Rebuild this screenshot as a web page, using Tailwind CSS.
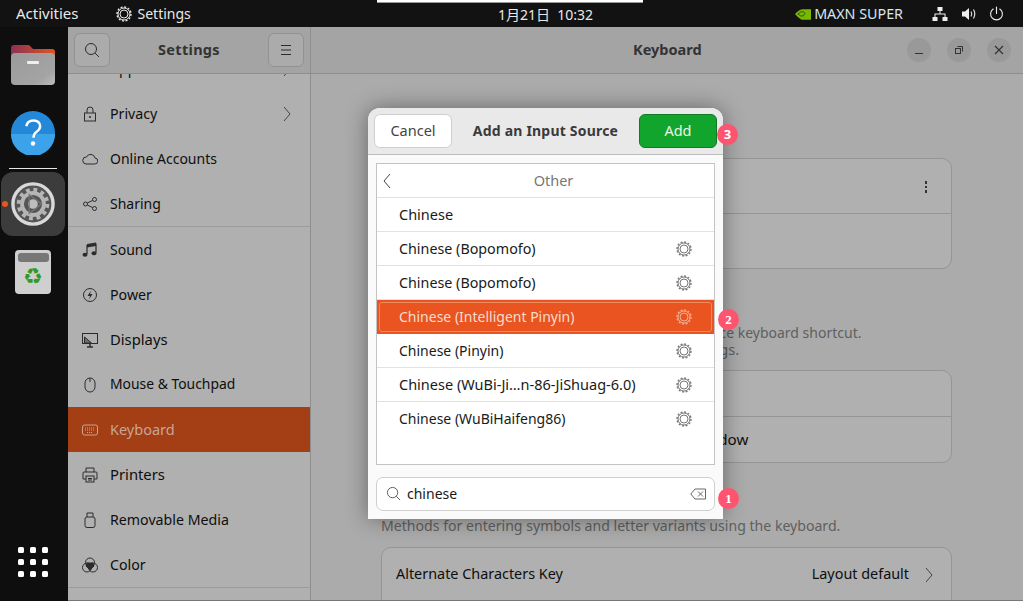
<!DOCTYPE html>
<html><head><meta charset="utf-8"><script src="https://cdn.jsdelivr.net/npm/@tailwindcss/browser@4"></script></head>
<body class="w-[1023px] h-[601px] overflow-hidden bg-[#0e0e0e] font-['Noto_Sans','Noto_Sans_CJK_SC',sans-serif] text-[14.2px]">
<div class="relative w-[1023px] h-[601px] flex flex-col overflow-hidden">
<!-- top bar -->
<header class="h-[27px] shrink-0 bg-[#121212] text-[#e9e9e9] flex items-center relative text-[14px]">
  <span class="ml-[16px] text-[15px]">Activities</span>
  <span class="ml-[37px] flex items-center gap-[6px]">
    <svg class="w-[16px] h-[16px]" viewBox="0 0 16 16" fill="none" stroke="#e9e9e9"><circle cx="8" cy="8" r="7" stroke-width="1.400" stroke-dasharray="2 1.660"/><circle cx="8" cy="8" r="6" stroke-width="1"/><circle cx="8" cy="8" r="4" stroke-width="1"/></svg>
    Settings</span>
  <span class="absolute left-[498px] top-[5px] text-[14px] leading-[20px]">1月21日&nbsp; 10:32</span>
  <span class="absolute left-[377px] top-0 w-[266px] h-[3px] bg-white border-b border-[#999]"></span>
  <div class="ml-auto flex items-center mr-[19px]">
    <svg class="w-[16px] h-[12px] mr-[3px]" viewBox="0 0 17 12"><path d="M0 6 Q5 0 10 1 H17 V12 H7 Q3 10 0 6Z" fill="#76b900"/><path d="M3 6 Q6 3 9 3.500 Q12 5 9 8 Q6 9 3 6Z" fill="none" stroke="#345200" stroke-width="1"/></svg>
    <span class="text-[#d8e6f0] text-[14.300px]">MAXN SUPER</span>
    <svg class="w-[16px] h-[16px] ml-[29px]" viewBox="0 0 16 16" fill="#eee"><rect x="5.500" y="1" width="5" height="4"/><rect x="0.500" y="11" width="5" height="4"/><rect x="10.500" y="11" width="5" height="4"/><path d="M7.500 5h1v2.500h5V11h-1V8.500H3.500V11h-1V7.500h5z"/></svg>
    <svg class="w-[16px] h-[16px] ml-[13px]" viewBox="0 0 16 16"><path d="M1 5.500h3L8 2v12L4 10.500H1z" fill="#eee"/><path d="M10 5.500q1.500 2.500 0 5M12.500 3.500q2.500 4.500 0 9" fill="none" stroke="#ddd" stroke-width="1.200"/></svg>
    <svg class="w-[15px] h-[15px] ml-[12px]" viewBox="0 0 16 16" fill="none" stroke="#eee" stroke-width="1.200" stroke-linecap="round"><path d="M8 1v7M4.500 3.200a6.300 6.300 0 1 0 7 0"/></svg>
  </div>
</header>
<div class="flex-1 flex min-h-0">
  <!-- dock -->
  <aside class="w-[68px] shrink-0 bg-[#0e0e0e] flex flex-col items-center relative pr-[2px]">
    <svg class="w-[46px] h-[42px] mt-[17px]" viewBox="0 0 46 42"><defs><linearGradient id="f1" x1="0" y1="0" x2="1" y2="0"><stop offset="0" stop-color="#8e3055"/><stop offset="1" stop-color="#e0561f"/></linearGradient><linearGradient id="f2" x1="0" y1="0" x2="1" y2="1"><stop offset="0" stop-color="#9a9a9a"/><stop offset=".75" stop-color="#a4a4a4"/><stop offset="1" stop-color="#bdbdbd"/></linearGradient></defs><path d="M1 20V4q0-3 3-3h15l4 4h19q3 0 3 3v12z" fill="url(#f1)"/><rect x="1" y="9" width="44" height="32" rx="4" fill="url(#f2)"/><rect x="17" y="17" width="12" height="3" rx="1" fill="#eee"/></svg>
    <svg class="w-[44px] h-[44px] mt-[25px]" viewBox="0 0 46 46"><circle cx="23" cy="23" r="23" fill="#2488d8"/><path d="M0 24a23 23 0 0 0 46 0z" fill="#3ca3ea"/><path d="M16 16q1-6 7.500-6t7 6q0 3-4 6-3 2-3 6" fill="none" stroke="#fff" stroke-width="2.500"/><circle cx="23" cy="34" r="2.300" fill="#fff"/></svg>
    <div class="w-[48px] h-[1px] bg-[#e8e8e8] mt-[13px]"></div>
    <div class="w-[64px] h-[64px] rounded-[12px] bg-[#3c3c3c] mt-[3px] flex items-center justify-center relative">
      <span class="absolute left-[1px] top-[29px] w-[6px] h-[6px] rounded-full bg-[#e95420]"></span>
      <svg class="w-[44px] h-[44px]" viewBox="0 0 46 46"><circle cx="23" cy="23" r="21" fill="#555" stroke="#d9d9d9" stroke-width="3.500"/><circle cx="23" cy="23" r="11.500" fill="none" stroke="#b5b5b5" stroke-width="4" /><circle cx="23" cy="23" r="15" fill="none" stroke="#b5b5b5" stroke-width="4" stroke-dasharray="4 3.850"/><circle cx="23" cy="23" r="5" fill="#bdbdbd"/><path d="M19 13l13 10-13 10z" fill="none" stroke="#777" stroke-width="1.200"/></svg>
    </div>
    <div class="w-[36px] h-[44px] mt-[14px] rounded-[4px] bg-[#cfcfcf] flex flex-col items-center pt-[3px]">
      <span class="w-[31px] h-[9px] rounded-[3px] bg-[#777] shrink-0"></span>
      <span class="text-[#2f9a27] text-[22px] leading-[30px] font-['DejaVu_Sans',sans-serif]">♻</span>
    </div>
    <div class="absolute left-[18px] bottom-[24px] grid grid-cols-3 gap-[6px]">
      <span class="w-[6px] h-[6px] rounded-[1.500px] bg-white"></span><span class="w-[6px] h-[6px] rounded-[1.500px] bg-white"></span><span class="w-[6px] h-[6px] rounded-[1.500px] bg-white"></span>
      <span class="w-[6px] h-[6px] rounded-[1.500px] bg-white"></span><span class="w-[6px] h-[6px] rounded-[1.500px] bg-white"></span><span class="w-[6px] h-[6px] rounded-[1.500px] bg-white"></span>
      <span class="w-[6px] h-[6px] rounded-[1.500px] bg-white"></span><span class="w-[6px] h-[6px] rounded-[1.500px] bg-white"></span><span class="w-[6px] h-[6px] rounded-[1.500px] bg-white"></span>
    </div>
  </aside>
  <!-- window -->
  <div class="flex-1 flex flex-col min-w-0 border-b border-[#777]">
    <div class="h-[47px] shrink-0 flex bg-[#a4a4a4] border-b border-[#8e8e8e]">
      <div class="w-[243px] shrink-0 border-r border-[#8e8e8e] flex items-center justify-between px-[6px]">
        <span class="w-[36px] h-[34px] rounded-[6px] border border-[#929292] bg-[#ababab] flex items-center justify-center"><svg class="w-[16px] h-[16px]" viewBox="0 0 16 16" fill="none" stroke="#2c2c2c" stroke-width="1"><circle cx="7" cy="7" r="5.500"/><path d="M11 11l4 4"/></svg></span>
        <span class="font-bold text-[#333] tracking-[.3px] text-[14.500px]">Settings</span>
        <span class="w-[36px] h-[34px] rounded-[6px] border border-[#929292] bg-[#ababab] flex items-center justify-center"><svg class="w-[12px] h-[10px]" viewBox="0 0 12 10" stroke="#2c2c2c"><path d="M1 .5h10M1 5h10M1 9.500h10"/></svg></span>
      </div>
      <div class="flex-1 flex items-center relative">
        <span class="absolute left-[322px] font-bold text-[#333] text-[14.500px]">Keyboard</span>
        <div class="ml-auto flex gap-[16px] mr-[12px]">
          <span class="w-[24px] h-[24px] rounded-full bg-[#999] flex items-center justify-center"><svg class="w-[10px] h-[10px]" viewBox="0 0 10 10" stroke="#333"><path d="M1 8.500h8"/></svg></span>
          <span class="w-[24px] h-[24px] rounded-full bg-[#999] flex items-center justify-center"><svg class="w-[10px] h-[10px]" viewBox="0 0 10 10" fill="none" stroke="#333"><rect x="1.500" y="3.500" width="5" height="5"/><path d="M3.500 1.500h5v5"/></svg></span>
          <span class="w-[24px] h-[24px] rounded-full bg-[#999] flex items-center justify-center"><svg class="w-[10px] h-[10px]" viewBox="0 0 10 10" stroke="#333" stroke-width="1.200"><path d="M1 1l8 8M9 1l-8 8"/></svg></span>
        </div>
      </div>
    </div>
    <div class="flex-1 flex min-h-0">
      <!-- sidebar -->
      <nav class="w-[243px] shrink-0 bg-[#b0b0b0] border-r border-[#8e8e8e] overflow-hidden text-[#0e0e0e]">
        <div class="-mt-[28px]">
          <div class="h-[45px] flex items-center pl-[42px] relative">Applications<svg class="absolute left-[214px] w-[10px] h-[16px]" viewBox="0 0 10 16" fill="none" stroke="#444"><path d="M2 1l6 7-6 7"/></svg></div>
          <div class="h-[45px] flex items-center relative"><svg class="w-[16px] h-[16px] ml-[14px] mr-[12px]" viewBox="0 0 16 16" fill="none" stroke="#2c2c2c"><rect x="2.500" y="7" width="11" height="8"/><path d="M5 7V4a3 3 0 0 1 6 0v3"/><circle cx="8" cy="11" r=".6" fill="#2c2c2c"/></svg>Privacy<svg class="absolute left-[214px] w-[10px] h-[16px]" viewBox="0 0 10 16" fill="none" stroke="#444"><path d="M2 1l6 7-6 7"/></svg></div>
          <div class="h-[45px] flex items-center text-[14px]"><svg class="w-[16px] h-[16px] ml-[14px] mr-[12px]" viewBox="0 0 16 16" fill="none" stroke="#2c2c2c"><path d="M4 13h8.500a3 3 0 0 0 .5-6 4.500 4.500 0 0 0-8.500-1A3.500 3.500 0 0 0 4 13z"/></svg>Online Accounts</div>
          <div class="h-[45px] flex items-center border-b border-[#9b9b9b] box-content text-[14px]"><svg class="w-[16px] h-[16px] ml-[14px] mr-[12px]" viewBox="0 0 16 16" fill="none" stroke="#2c2c2c"><circle cx="3.500" cy="8" r="2"/><circle cx="12.500" cy="3.500" r="2"/><circle cx="12.500" cy="12.500" r="2"/><path d="M5.300 7l5.400-2.600M5.300 9l5.400 2.600"/></svg>Sharing</div>
          <div class="h-[45px] flex items-center text-[14px]"><svg class="w-[16px] h-[16px] ml-[14px] mr-[12px]" viewBox="0 0 16 16"><path d="M5 3v9M14 1.500v9" stroke="#2c2c2c" stroke-width="1.200"/><path d="M5 2l9-1.500V4L5 5.500z" fill="#2c2c2c"/><ellipse cx="3" cy="12.800" rx="2.500" ry="2" fill="#2c2c2c"/><ellipse cx="12" cy="11.300" rx="2.500" ry="2" fill="#2c2c2c"/></svg>Sound</div>
          <div class="h-[45px] flex items-center"><svg class="w-[16px] h-[16px] ml-[14px] mr-[12px]" viewBox="0 0 16 16" fill="none" stroke="#2c2c2c"><circle cx="8" cy="8" r="6.500"/><path d="M9 3.500L5.500 9h2.500l-1 3.500L10.500 7H8z" fill="#2c2c2c" stroke="none"/></svg>Power</div>
          <div class="h-[45px] flex items-center text-[14.800px]"><svg class="w-[16px] h-[16px] ml-[14px] mr-[12px]" viewBox="0 0 16 16" fill="none" stroke="#2c2c2c"><rect x=".5" y="1.500" width="15" height="10"/><path d="M5 15h6M8 11.500V15" stroke-width="1.500"/><path d="M2.500 5l7 6H2.500z" fill="#2c2c2c" fill-opacity=".5"/></svg>Displays</div>
          <div class="h-[45px] flex items-center text-[13.900px]"><svg class="w-[16px] h-[16px] ml-[14px] mr-[12px]" viewBox="0 0 16 16" fill="none" stroke="#2c2c2c"><rect x="3" y="1" width="10" height="14" rx="5"/><path d="M8 1v4"/></svg>Mouse &amp; Touchpad</div>
          <div class="h-[45px] flex items-center bg-[#a33e15] text-[#c9a597] text-[14.500px]"><svg class="w-[16px] h-[16px] ml-[14px] mr-[12px]" viewBox="0 0 16 16" fill="none" stroke="#c9a597"><rect x=".5" y="3" width="15" height="10" rx="2"/><path d="M3 6h10M3 8h10M5 10.500h6" stroke-dasharray="1 1"/></svg>Keyboard</div>
          <div class="h-[45px] flex items-center text-[14.800px]"><svg class="w-[16px] h-[16px] ml-[14px] mr-[12px]" viewBox="0 0 16 16" fill="none" stroke="#2c2c2c"><path d="M4 5V1h8v4"/><path d="M4 12H1V6q0-1 1-1h12q1 0 1 1v6h-3"/><rect x="4" y="9" width="8" height="6"/><path d="M6 11.500h4M6 13h4"/></svg>Printers</div>
          <div class="h-[45px] flex items-center"><svg class="w-[16px] h-[16px] ml-[14px] mr-[12px]" viewBox="0 0 16 16" fill="none" stroke="#2c2c2c"><rect x="3" y="5" width="10" height="10.500" rx="2"/><path d="M5 5V1h6v4M7 3h0M9 3h0"/></svg>Removable Media</div>
          <div class="h-[45px] flex items-center border-b border-[#9b9b9b] box-content"><svg class="w-[16px] h-[16px] ml-[14px] mr-[12px]" viewBox="0 0 16 16" fill="none" stroke="#2c2c2c"><circle cx="8" cy="5.500" r="4.500"/><circle cx="5" cy="10.500" r="4.500"/><circle cx="11" cy="10.500" r="4.500"/><path d="M5 6h6l1 3-4 4-4-4z" fill="#2c2c2c"/></svg>Color</div>
        </div>
      </nav>
      <!-- main -->
      <main class="flex-1 bg-[#ababab] pl-[70px] pr-[71px] min-w-0 text-[#0e0e0e] overflow-hidden">
        <div class="mt-[84px] h-[111px] rounded-[10px] border border-[#959595] bg-[#b0b0b0] flex flex-col">
          <div class="h-[55px] border-b border-[#959595] flex justify-end pr-[24px] pt-[22px]"><span class="flex flex-col gap-[2px]"><i class="w-[2.500px] h-[2.500px] bg-[#333]"></i><i class="w-[2.500px] h-[2.500px] bg-[#333]"></i><i class="w-[2.500px] h-[2.500px] bg-[#333]"></i></span></div>
        </div>
        <p class="mt-[55px] text-[#5f5f5f] text-[14px] leading-[17px] whitespace-nowrap">Input sources can be switched using the Super+Space keyboard shortcut.<br><span class="text-[14.650px]">This can be changed in Keyboard Shortcuts settings.</span></p>
        <div class="mt-[12px] h-[93px] rounded-[10px] border border-[#959595] bg-[#b0b0b0] flex flex-col">
          <div class="h-[46px] border-b border-[#959595]"></div>
          <div class="flex-1 flex items-center pl-[14px] text-[15.150px] whitespace-nowrap">Switch input sources individually for each window</div>
        </div>
        <p class="mt-[53px] text-[#5f5f5f] text-[14.100px] leading-[20px]">Methods for entering symbols and letter variants using the keyboard.</p>
        <div class="mt-[11px] h-[70px] rounded-t-[10px] border border-[#959595] bg-[#b0b0b0] flex pl-[14px] pr-[17px] pt-[15px] items-start justify-between text-[14.400px]">
          <span>Alternate Characters Key</span>
          <span class="flex items-center">Layout default<svg class="w-[10px] h-[16px] ml-[15px] mt-[2px]" viewBox="0 0 10 16" fill="none" stroke="#444"><path d="M2 1l6 7-6 7"/></svg></span>
        </div>
      </main>
    </div>
  </div>
</div>
<!-- dialog -->
<div class="absolute left-[368px] top-[108px] w-[355px] h-[411px] rounded-t-[12px] bg-[#fafafa] shadow-[0_0_22px_rgba(0,0,0,.4)] flex flex-col text-[#1a1a1a] text-[14px]">
  <div class="h-[47px] shrink-0 rounded-t-[12px] bg-[#e9e9e9] border-b border-[#bdbdbd] flex items-center px-[6px] justify-between">
    <span class="w-[78px] h-[34px] rounded-[6px] border border-[#cfcfcf] bg-white flex items-center justify-center text-[#444] text-[14.500px]">Cancel</span>
    <span class="font-bold text-[#3a3a3a] tracking-[.2px] text-[14px] pb-[2px]">Add an Input Source</span>
    <span class="w-[78px] h-[34px] rounded-[6px] border border-[#117a22] bg-[#12a52d] flex items-center justify-center text-[#e8f5e8] text-[14.500px]">Add</span>
  </div>
  <div class="mx-[8px] mt-[8px] h-[302px] border border-[#c4c4c4] bg-white flex flex-col">
    <div class="h-[34px] border-b border-[#e2e2e2] flex items-center relative justify-center text-[#777] pl-[16px] text-[14.500px]"><svg class="absolute left-[6px] w-[8px] h-[16px]" viewBox="0 0 8 16" fill="none" stroke="#444"><path d="M7 1L1 8l6 7"/></svg>Other</div>
    <div class="h-[34px] border-b border-[#e2e2e2] flex items-center pl-[22px] text-[14.500px]">Chinese</div>
    <div class="h-[34px] border-b border-[#e2e2e2] flex items-center justify-between pl-[22px] pr-[22px] text-[14.300px]">Chinese (Bopomofo)<svg class="w-[16px] h-[16px]" viewBox="0 0 16 16" fill="none" stroke="#777"><circle cx="8" cy="8" r="7" stroke-width="1.400" stroke-dasharray="2 1.660"/><circle cx="8" cy="8" r="6" stroke-width="1"/><circle cx="8" cy="8" r="4" stroke-width="1"/></svg></div>
    <div class="h-[34px] border-b border-[#e2e2e2] flex items-center justify-between pl-[22px] pr-[22px] text-[14.300px]">Chinese (Bopomofo)<svg class="w-[16px] h-[16px]" viewBox="0 0 16 16" fill="none" stroke="#777"><circle cx="8" cy="8" r="7" stroke-width="1.400" stroke-dasharray="2 1.660"/><circle cx="8" cy="8" r="6" stroke-width="1"/><circle cx="8" cy="8" r="4" stroke-width="1"/></svg></div>
    <div class="h-[34px] bg-[#e95420] p-[2px]"><div class="h-full border border-[#f08a5f] rounded-[3px] flex items-center justify-between pl-[19px] pr-[19px] pb-[1px] text-[#f6dccf]">Chinese (Intelligent Pinyin)<svg class="w-[16px] h-[16px]" viewBox="0 0 16 16" fill="none" stroke="#f2b094"><circle cx="8" cy="8" r="7" stroke-width="1.400" stroke-dasharray="2 1.660"/><circle cx="8" cy="8" r="6" stroke-width="1"/><circle cx="8" cy="8" r="4" stroke-width="1"/></svg></div></div>
    <div class="h-[34px] border-b border-[#e2e2e2] flex items-center justify-between pl-[22px] pr-[22px]">Chinese (Pinyin)<svg class="w-[16px] h-[16px]" viewBox="0 0 16 16" fill="none" stroke="#777"><circle cx="8" cy="8" r="7" stroke-width="1.400" stroke-dasharray="2 1.660"/><circle cx="8" cy="8" r="6" stroke-width="1"/><circle cx="8" cy="8" r="4" stroke-width="1"/></svg></div>
    <div class="h-[34px] border-b border-[#e2e2e2] flex items-center justify-between pl-[22px] pr-[22px] text-[14.500px]">Chinese (WuBi-Ji…n-86-JiShuag-6.0)<svg class="w-[16px] h-[16px]" viewBox="0 0 16 16" fill="none" stroke="#777"><circle cx="8" cy="8" r="7" stroke-width="1.400" stroke-dasharray="2 1.660"/><circle cx="8" cy="8" r="6" stroke-width="1"/><circle cx="8" cy="8" r="4" stroke-width="1"/></svg></div>
    <div class="h-[34px] pb-[1px] flex items-center justify-between pl-[22px] pr-[22px]">Chinese (WuBiHaifeng86)<svg class="w-[16px] h-[16px]" viewBox="0 0 16 16" fill="none" stroke="#777"><circle cx="8" cy="8" r="7" stroke-width="1.400" stroke-dasharray="2 1.660"/><circle cx="8" cy="8" r="6" stroke-width="1"/><circle cx="8" cy="8" r="4" stroke-width="1"/></svg></div>
  </div>
  <div class="mx-[8px] mt-[12px] h-[34px] rounded-[7px] border border-[#cfcfcf] bg-white flex items-center pl-[9px] pr-[8px] pb-[1px]">
    <svg class="w-[15px] h-[15px] mr-[6px]" viewBox="0 0 16 16" fill="none" stroke="#555"><circle cx="7" cy="7" r="5.500"/><path d="M11 11l4 4"/></svg>chinese
    <svg class="w-[16px] h-[12px] ml-auto" viewBox="0 0 16 12" fill="none" stroke="#666"><path d="M15.500 1H5L.8 6 5 11h10.500z"/><path d="M8 3.500l5 5M13 3.500l-5 5"/></svg>
  </div>
</div>
<span class="absolute left-[717px] top-[124px] w-[21px] h-[21px] rounded-full bg-[#ff5470] text-white text-[13px] font-bold flex items-center justify-center">3</span>
<span class="absolute left-[718px] top-[309px] w-[21px] h-[21px] rounded-full bg-[#ff5470] text-white text-[13px] font-bold flex items-center justify-center font-['Liberation_Serif',serif]">2</span>
<span class="absolute left-[718px] top-[488px] w-[21px] h-[21px] rounded-full bg-[#ff5470] text-white text-[13px] font-bold flex items-center justify-center font-['Liberation_Serif',serif]">1</span>
</div>
</body></html>
